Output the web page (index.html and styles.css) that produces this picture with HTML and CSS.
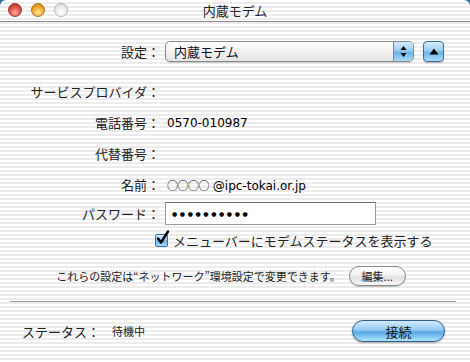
FILE: index.html
```html
<!DOCTYPE html>
<html lang="ja">
<head>
  <meta charset="UTF-8" />
  <title>内蔵モデム</title>
  <link rel="stylesheet" href="styles.css">
</head>
<body>

  <div class="window">
    <div class="titlebar">
      <div class="lights">
        <span class="light close"></span>
        <span class="light minimize"></span>
        <span class="light zoom"></span>
      </div>
      <div class="title">内蔵モデム</div>
    </div>

    <div class="form">
      <div class="row row-config">
        <div class="label">設定：</div>
        <div class="popup">
          <span class="popup-text">内蔵モデム</span>
          <span class="popup-arrows">
            <svg width="7" height="13" viewBox="0 0 7 13"><path d="M3.5 1 L6.5 5 L0.5 5 Z M3.5 12 L6.5 8 L0.5 8 Z" fill="#000"/></svg>
          </span>
        </div>
        <div class="square-btn">
          <svg width="10" height="7" viewBox="0 0 10 7"><path d="M5 0.5 L9.5 6.5 L0.5 6.5 Z" fill="#000"/></svg>
        </div>
      </div>

      <div class="row row-provider">
        <div class="label">サービスプロバイダ：</div>
      </div>

      <div class="row">
        <div class="label">電話番号：</div>
        <div class="value">0570-010987</div>
      </div>

      <div class="row">
        <div class="label">代替番号：</div>
      </div>

      <div class="row">
        <div class="label">名前：</div>
        <div class="value"><span class="circles">○○○○</span> @ipc-tokai.or.jp</div>
      </div>

      <div class="row row-password">
        <div class="label">パスワード：</div>
        <div class="field">●●●●●●●●●●</div>
      </div>

      <div class="check-row">
        <span class="checkbox">
          <svg width="15" height="16" viewBox="0 0 15 16"><path d="M3 8.5 L6 12.5 L13 1.5" fill="none" stroke="#000" stroke-width="2.4" stroke-linecap="round" stroke-linejoin="round"/></svg>
        </span>
        <span class="check-label">メニューバーにモデムステータスを表示する</span>
      </div>
    </div>

    <div class="edit-row">
      <span class="note">これらの設定は“ネットワーク”環境設定で変更できます。</span>
      <button class="pill-btn">編集...</button>
    </div>

    <div class="separator"></div>

    <div class="status-row">
      <div class="status">
        <span class="status-label">ステータス：</span>
        <span class="status-value">待機中</span>
      </div>
      <button class="blue-btn">接続</button>
    </div>
  </div>

</body>
</html>
```

FILE: styles.css
```css
* {
  margin: 0;
  padding: 0;
  box-sizing: border-box;
}

body {
  background: #2c6f9e;
  font-family: "Noto Sans CJK JP", sans-serif;
  font-size: 13px;
  color: #111;
}

.window {
  width: 470px;
  height: 362px;
  border-radius: 6px 6px 0 0;
  overflow: hidden;
  background: repeating-linear-gradient(to bottom, #ffffff 0, #ffffff 2px, #ececec 2px, #ececec 4px);
}

.titlebar {
  height: 22px;
  border-bottom: 1px solid #8c8c8c;
  position: relative;
  display: flex;
  align-items: center;
  justify-content: center;
}

.lights {
  position: absolute;
  left: 8px;
  top: 3px;
  display: flex;
  gap: 9px;
}

.light {
  width: 14px;
  height: 14px;
  border-radius: 50%;
}

.close {
  background: radial-gradient(circle at 50% 70%, #ffb0a8 0, #e9584f 45%, #b3261f 100%);
  border: 1px solid #9a3a33;
}

.minimize {
  background: radial-gradient(circle at 50% 70%, #ffe7a0 0, #f6ae3a 45%, #c97a10 100%);
  border: 1px solid #a8721c;
}

.zoom {
  background: radial-gradient(circle at 50% 70%, #ffffff 0, #ececec 50%, #cfcfcf 100%);
  border: 1px solid #b5b5b5;
}

.title {
  font-size: 13px;
  color: #222;
  line-height: 22px;
}

.form {
  padding-top: 19px;
}

.row {
  display: flex;
  align-items: center;
  height: 21px;
  margin-bottom: 10px;
}

.row-config {
  margin-bottom: 19px;
}

.row-password {
  height: 23px;
  margin-top: -3px;
  margin-bottom: 9px;
}

.label {
  width: 160px;
  text-align: right;
  color: #222;
  flex-shrink: 0;
}

.value {
  margin-left: 7px;
  font-family: "DejaVu Sans", "Noto Sans CJK JP", sans-serif;
  font-size: 12px;
  color: #000;
}

.circles {
  font-family: "Noto Sans CJK JP", sans-serif;
  font-size: 11px;
  letter-spacing: -0.5px;
}

.popup {
  margin-left: 5px;
  width: 249px;
  height: 21px;
  border: 1px solid #8a8a8a;
  border-radius: 5px;
  background: linear-gradient(to bottom, #ffffff, #efefef 60%, #e4e4e4);
  display: flex;
  align-items: center;
  overflow: hidden;
  box-shadow: 0 1px 1px rgba(0, 0, 0, 0.15);
}

.popup-text {
  flex: 1;
  padding-left: 8px;
}

.popup-arrows {
  width: 20px;
  height: 100%;
  display: flex;
  align-items: center;
  justify-content: center;
  border-left: 1px solid #5b8fbf;
  background: linear-gradient(to bottom, #d6ecfb 0%, #9ccdf1 45%, #6cb3ea 55%, #a9dbfa 100%);
}

.square-btn {
  margin-left: 9px;
  width: 21px;
  height: 21px;
  border: 1px solid #3c6e9c;
  border-radius: 4px;
  display: flex;
  align-items: center;
  justify-content: center;
  background: linear-gradient(to bottom, #d6ecfb 0%, #9ccdf1 45%, #6cb3ea 55%, #a9dbfa 100%);
  box-shadow: 0 1px 1px rgba(0, 0, 0, 0.25);
}

.field {
  margin-left: 5px;
  width: 211px;
  height: 23px;
  background: #fff;
  border: 1px solid #9a9a9a;
  border-top-color: #6e6e6e;
  font-family: "DejaVu Sans", sans-serif;
  font-size: 6px;
  letter-spacing: 2.6px;
  line-height: 21px;
  padding-left: 6px;
  color: #000;
}

.check-row {
  display: flex;
  align-items: center;
  height: 16px;
  padding-left: 155px;
  margin-top: -2px;
}

.checkbox {
  position: relative;
  width: 13px;
  height: 13px;
  border: 1px solid #3d6f9d;
  border-radius: 2px;
  background: linear-gradient(to bottom, #d6ecfb 0%, #9ccdf1 45%, #6cb3ea 55%, #a9dbfa 100%);
}

.checkbox svg {
  position: absolute;
  left: -1px;
  top: -5px;
}

.check-label {
  margin-left: 5px;
  color: #222;
}

.edit-row {
  display: flex;
  align-items: center;
  justify-content: center;
  gap: 8px;
  margin-top: 18px;
  padding-right: 8px;
  height: 20px;
}

.note {
  font-size: 11px;
  color: #222;
}

.pill-btn {
  width: 57px;
  height: 20px;
  border: 1px solid #8a8a8a;
  border-radius: 10px;
  background: linear-gradient(to bottom, #ffffff 0%, #f2f2f2 45%, #e0e0e0 55%, #f7f7f7 100%);
  font-family: "Noto Sans CJK JP", sans-serif;
  font-size: 11px;
  color: #222;
  box-shadow: 0 1px 1px rgba(0, 0, 0, 0.2);
}

.separator {
  margin: 15px 14px 0 10px;
  height: 1px;
  background: #9a9a9a;
}

.status-row {
  display: flex;
  align-items: center;
  justify-content: space-between;
  margin-top: 18px;
  padding: 0 25px 0 22px;
  height: 22px;
}

.status {
  display: flex;
  align-items: center;
}

.status-label {
  color: #222;
}

.status-value {
  margin-left: 12px;
  font-size: 11px;
  color: #222;
}

.blue-btn {
  width: 93px;
  height: 22px;
  border: 1px solid #2d5e8c;
  border-radius: 11px;
  background: linear-gradient(to bottom, #d2ebfb 0%, #93c9f0 45%, #5aa8e4 55%, #8fd0f7 85%, #b8e4fb 100%);
  font-family: "Noto Sans CJK JP", sans-serif;
  font-size: 13px;
  color: #111;
  box-shadow: 0 1px 2px rgba(0, 0, 0, 0.3);
}
```
